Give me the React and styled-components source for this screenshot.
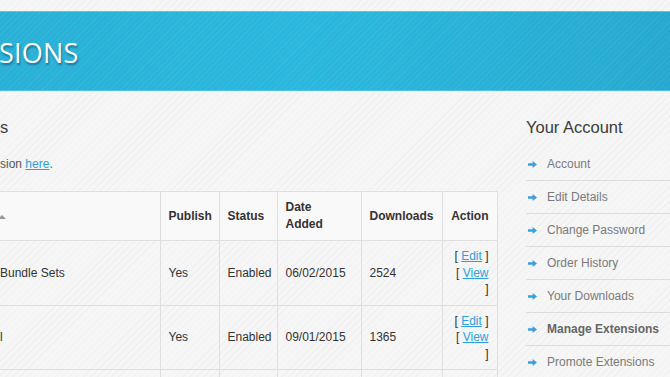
import styled, { createGlobalStyle } from "styled-components";

const Global = createGlobalStyle`
    html, body {
        margin: 0;
        padding: 0;
        overflow: hidden;
    }
    body {
        font-family: "Liberation Sans", Arial, sans-serif;
        font-size: 12px;
        color: #333;
        background-color: #f6f6f6;
        background-image: repeating-linear-gradient(135deg, rgba(0,0,0,0.025) 0 1px, transparent 1px 5px);
    }
`;

const S = {
    Page: styled.div`
        padding-top: 11px;
        width: 670px;
    `,
    Banner: styled.header`
        height: 78px;
        display: flex;
        align-items: center;
        border-top: 1px solid #5cc7e3;
        border-bottom: 1px solid #4fc0df;
        background-color: #2ab4da;
        background-image:
            repeating-linear-gradient(135deg, rgba(255,255,255,0.05) 0 1px, transparent 1px 4px),
            linear-gradient(90deg, #29b0d6 0%, #2bb8de 45%, #27a9cf 100%);
    `,
    Title: styled.h1`
        margin: 3px 0 0 -1px;
        font-family: "Open Sans", "DejaVu Sans", sans-serif;
        font-weight: 400;
        font-size: 27px;
        letter-spacing: 0.2px;
        color: #fff;
        text-shadow: 1px 2px 2px rgba(0, 40, 60, 0.45);
    `,
    Body: styled.div`
        display: flex;
        gap: 29px;
        padding-top: 26px;
    `,
    Main: styled.main`
        width: 497px;
        flex: none;
    `,
    Heading: styled.h2`
        margin: 0;
        font-family: "Liberation Sans", Arial, sans-serif;
        font-weight: 400;
        font-size: 16.5px;
        line-height: 20px;
        color: #3c3c3c;
    `,
    Intro: styled.p`
        margin: 19px 0 19px;
        line-height: 16px;
        color: #555;
    `,
    Link: styled.a`
        color: #2d9fd9;
        text-decoration: underline;
    `,
    Table: styled.table`
        width: 497px;
        table-layout: fixed;
        border-collapse: collapse;
    `,
    Th: styled.th`
        padding: 7px 8px;
        padding-left: ${(p) => (p.$clip ? "0" : "8px")};
        padding-right: ${(p) => (p.$wrap ? "14px" : "8px")};
        border: 1px solid #dedede;
        border-left: ${(p) => (p.$clip ? "none" : "1px solid #dedede")};
        background: #f9f9f9;
        text-align: ${(p) => p.$align || "left"};
        font-weight: 700;
        line-height: 17px;
        color: #333;
        vertical-align: middle;
    `,
    Td: styled.td`
        padding: 7px 8px;
        padding-left: ${(p) => (p.$clip ? "0" : "8px")};
        border: 1px solid #dedede;
        border-left: ${(p) => (p.$clip ? "none" : "1px solid #dedede")};
        text-align: ${(p) => p.$align || "left"};
        line-height: 16.5px;
        color: #333;
        vertical-align: middle;
    `,
    SortArrow: styled.span`
        display: inline-block;
        width: 0;
        height: 0;
        border-left: 4px solid transparent;
        border-right: 4px solid transparent;
        border-bottom: 4px solid #999;
        margin-left: -2px;
        vertical-align: 1px;
    `,
    Aside: styled.aside`
        flex: 1;
    `,
    Menu: styled.ul`
        list-style: none;
        margin: 11px 0 0;
        padding: 0;
    `,
    MenuItem: styled.li`
        height: 32px;
        display: flex;
        align-items: center;
        gap: 10px;
        padding-left: 2px;
        border-bottom: 1px solid #dcdcdc;
        font-size: 12px;
        font-weight: ${(p) => (p.$active ? 700 : 400)};
        color: ${(p) => (p.$active ? "#666" : "#7a7a7a")};
    `,
};

const ArrowIcon = () => (
    <svg width="9" height="7" viewBox="0 0 9 7">
        <path d="M0 2.2h4.6V0L9 3.5 4.6 7V4.8H0z" fill="#3b9fdf" />
    </svg>
);

const rows = [
    { name: "Bundle Sets", publish: "Yes", status: "Enabled", date: "06/02/2015", downloads: "2524" },
    { name: "l", publish: "Yes", status: "Enabled", date: "09/01/2015", downloads: "1365" },
    { name: "", publish: "", status: "", date: "", downloads: "" },
];

const menu = [
    "Account",
    "Edit Details",
    "Change Password",
    "Order History",
    "Your Downloads",
    "Manage Extensions",
    "Promote Extensions",
];

function App() {
    return (
        <S.Page>
            <Global />
            <S.Banner>
                <S.Title>SIONS</S.Title>
            </S.Banner>
            <S.Body>
                <S.Main>
                    <S.Heading>s</S.Heading>
                    <S.Intro>
                        sion <S.Link href="#">here</S.Link>.
                    </S.Intro>
                    <S.Table>
                        <colgroup>
                            <col style={{ width: 160 }} />
                            <col style={{ width: 59 }} />
                            <col style={{ width: 58 }} />
                            <col style={{ width: 84 }} />
                            <col style={{ width: 81 }} />
                            <col style={{ width: 55 }} />
                        </colgroup>
                        <thead>
                            <tr>
                                <S.Th $clip><S.SortArrow /></S.Th>
                                <S.Th>Publish</S.Th>
                                <S.Th>Status</S.Th>
                                <S.Th $wrap>Date Added</S.Th>
                                <S.Th>Downloads</S.Th>
                                <S.Th $align="right">Action</S.Th>
                            </tr>
                        </thead>
                        <tbody>
                            {rows.map((r, i) => (
                                <tr key={i}>
                                    <S.Td $clip>{r.name}</S.Td>
                                    <S.Td>{r.publish}</S.Td>
                                    <S.Td>{r.status}</S.Td>
                                    <S.Td>{r.date}</S.Td>
                                    <S.Td>{r.downloads}</S.Td>
                                    <S.Td $align="right">
                                        {r.name !== "" && (
                                            <>
                                                [ <S.Link href="#">Edit</S.Link> ] [ <S.Link href="#">View</S.Link> ]
                                            </>
                                        )}
                                    </S.Td>
                                </tr>
                            ))}
                        </tbody>
                    </S.Table>
                </S.Main>
                <S.Aside>
                    <S.Heading>Your Account</S.Heading>
                    <S.Menu>
                        {menu.map((m) => (
                            <S.MenuItem key={m} $active={m === "Manage Extensions"}>
                                <ArrowIcon />
                                {m}
                            </S.MenuItem>
                        ))}
                    </S.Menu>
                </S.Aside>
            </S.Body>
        </S.Page>
    );
}

export default App;
